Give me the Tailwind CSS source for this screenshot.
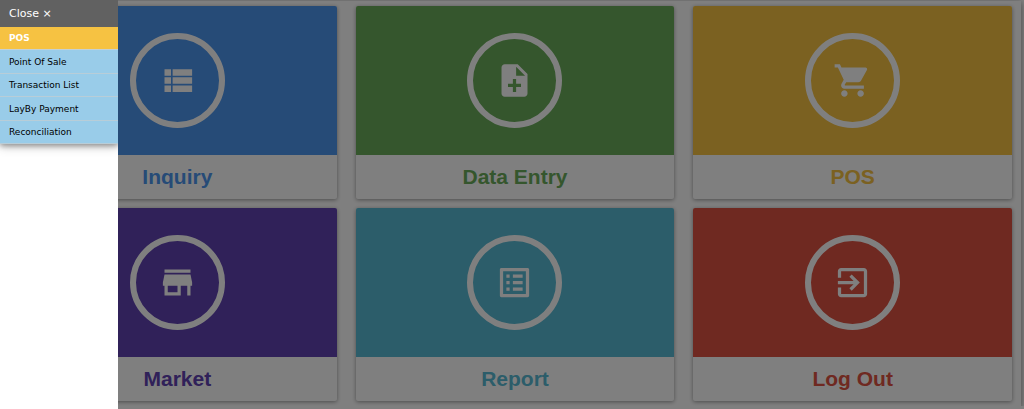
<!DOCTYPE html>
<html lang="en">
<head>
    <meta charset="UTF-8">
    <meta name="viewport" content="width=device-width, initial-scale=1.0">
    <title>POS</title>
    <script src="https://cdn.jsdelivr.net/npm/@tailwindcss/browser@4"></script>
</head>
<body class="bg-white font-['Liberation_Sans',Arial,sans-serif] overflow-hidden">
    <!-- Main menu -->
    <main class="mt-px mr-[3px] bg-white pt-[5px] pr-[9px] pb-[5px] pl-[18px] shadow-[0_2px_5px_rgba(0,0,0,0.3),0_2px_10px_rgba(0,0,0,0.2)]">
        <div class="grid grid-cols-3 gap-x-[19px] gap-y-[9px]">
            <a href="#inquiry" class="block rounded-xs overflow-hidden bg-white text-[#4c96ee] shadow-[0_1px_4px_rgba(0,0,0,0.4)]">
                <div class="flex justify-center bg-[#4c96ee] py-[27px]">
                    <div class="flex items-center justify-center size-[95px] rounded-full border-6 border-white text-white">
                        <svg class="size-[39px]" viewBox="0 0 24 24" fill="currentColor"><path d="M4 14h4v-4H4v4zm0 5h4v-4H4v4zM4 9h4V5H4v4zm5 5h12v-4H9v4zm0 5h12v-4H9v4zM9 5v4h12V5H9z"/></svg>
                    </div>
                </div>
                <h2 class="h-[44px] text-center text-[21px] leading-[44px] font-bold">Inquiry</h2>
            </a>
            <a href="#data-entry" class="block rounded-xs overflow-hidden bg-white text-[#6aac5a] shadow-[0_1px_4px_rgba(0,0,0,0.4)]">
                <div class="flex justify-center bg-[#6aac5a] py-[27px]">
                    <div class="flex items-center justify-center size-[95px] rounded-full border-6 border-white text-white">
                        <svg class="size-[39px]" viewBox="0 0 24 24" fill="currentColor"><path d="M14 2H6c-1.100 0-1.990.9-1.990 2L4 20c0 1.100.890 2 1.990 2H18c1.100 0 2-.9 2-2V8l-6-6zm2 14h-3v3h-2v-3H8v-2h3v-3h2v3h3v2zm-3-7V3.500L18.500 9H13z"/></svg>
                    </div>
                </div>
                <h2 class="h-[44px] text-center text-[21px] leading-[44px] font-bold">Data Entry</h2>
            </a>
            <a href="#pos" class="block rounded-xs overflow-hidden bg-white text-[#f6c242] shadow-[0_1px_4px_rgba(0,0,0,0.4)]">
                <div class="flex justify-center bg-[#f6c242] py-[27px]">
                    <div class="flex items-center justify-center size-[95px] rounded-full border-6 border-white text-white">
                        <svg class="size-[39px]" viewBox="0 0 24 24" fill="currentColor"><path d="M7 18c-1.100 0-1.990.9-1.990 2S5.900 22 7 22s2-.9 2-2-.9-2-2-2zM1 2v2h2l3.600 7.590-1.350 2.450c-.16.280-.25.610-.25.960 0 1.100.9 2 2 2h12v-2H7.420c-.14 0-.25-.11-.25-.25l.03-.12.900-1.630h7.450c.75 0 1.410-.41 1.750-1.030l3.580-6.490c.08-.14.120-.31.120-.48 0-.55-.45-1-1-1H5.210l-.94-2H1zm16 16c-1.100 0-1.990.9-1.990 2s.890 2 1.990 2 2-.9 2-2-.9-2-2-2z"/></svg>
                    </div>
                </div>
                <h2 class="h-[44px] text-center text-[21px] leading-[44px] font-bold">POS</h2>
            </a>
            <a href="#market" class="block rounded-xs overflow-hidden bg-white text-[#6042b2] shadow-[0_1px_4px_rgba(0,0,0,0.4)]">
                <div class="flex justify-center bg-[#6042b2] py-[27px]">
                    <div class="flex items-center justify-center size-[95px] rounded-full border-6 border-white text-white">
                        <svg class="size-[39px]" viewBox="0 0 24 24" fill="currentColor"><path d="M20 4H4v2h16V4zm1 10v-2l-1-5H4l-1 5v2h1v6h10v-6h4v6h2v-6h1zm-9 4H6v-4h6v4z"/></svg>
                    </div>
                </div>
                <h2 class="h-[44px] text-center text-[21px] leading-[44px] font-bold">Market</h2>
            </a>
            <a href="#report" class="block rounded-xs overflow-hidden bg-white text-[#58bad4] shadow-[0_1px_4px_rgba(0,0,0,0.4)]">
                <div class="flex justify-center bg-[#58bad4] py-[27px]">
                    <div class="flex items-center justify-center size-[95px] rounded-full border-6 border-white text-white">
                        <svg class="size-[39px]" viewBox="0 0 24 24" fill="currentColor"><path d="M19 5v14H5V5h14m1.100-2H3.900c-.5 0-.9.400-.9.900v16.200c0 .4.400.9.900.9h16.200c.4 0 .9-.5.900-.9V3.900c0-.5-.5-.9-.9-.9zM11 7h6v2h-6V7zm0 4h6v2h-6v-2zm0 4h6v2h-6zM7 7h2v2H7zm0 4h2v2H7zm0 4h2v2H7z"/></svg>
                    </div>
                </div>
                <h2 class="h-[44px] text-center text-[21px] leading-[44px] font-bold">Report</h2>
            </a>
            <a href="#logout" class="block rounded-xs overflow-hidden bg-white text-[#de5242] shadow-[0_1px_4px_rgba(0,0,0,0.4)]">
                <div class="flex justify-center bg-[#de5242] py-[27px]">
                    <div class="flex items-center justify-center size-[95px] rounded-full border-6 border-white text-white">
                        <svg class="size-[39px]" viewBox="0 0 24 24" fill="currentColor"><path d="M10.090 15.590L11.500 17l5-5-5-5-1.410 1.410L12.670 11H3v2h9.670l-2.580 2.590zM19 3H5c-1.110 0-2 .9-2 2v4h2V5h14v14H5v-4H3v4c0 1.100.890 2 2 2h14c1.100 0 2-.9 2-2V5c0-1.100-.9-2-2-2z"/></svg>
                    </div>
                </div>
                <h2 class="h-[44px] text-center text-[21px] leading-[44px] font-bold">Log Out</h2>
            </a>
        </div>
    </main>

    <!-- Overlay -->
    <div class="fixed inset-0 bg-black/50"></div>

    <!-- Sidebar -->
    <nav class="fixed inset-y-0 left-0 w-[118px] overflow-hidden bg-white font-[Verdana,'DejaVu_Sans',sans-serif]">
        <div class="shadow-[0_2px_5px_rgba(0,0,0,0.3),0_2px_10px_rgba(0,0,0,0.25)]">
            <button type="button" class="block w-full h-[27px] bg-[#616161] px-[9px] pt-0.5 text-left text-[11px] text-white">Close &times;</button>
            <div class="flex flex-col h-[117px] text-[9px] text-black">
                <a href="#pos" class="flex flex-1 items-center border-b border-[#c5d0d5] bg-[#f6c242] px-[9px] pt-0.5 font-bold text-white">POS</a>
                <a href="#sale" class="flex flex-1 items-center border-b border-[#b8cdd8] bg-[#99cce9] px-[9px] pt-0.5">Point Of Sale</a>
                <a href="#transactions" class="flex flex-1 items-center border-b border-[#b8cdd8] bg-[#99cce9] px-[9px] pt-0.5">Transaction List</a>
                <a href="#layby" class="flex flex-1 items-center border-b border-[#b8cdd8] bg-[#99cce9] px-[9px] pt-0.5">LayBy Payment</a>
                <a href="#reconciliation" class="flex flex-1 items-center border-b border-[#b8cdd8] bg-[#99cce9] px-[9px] pt-0.5">Reconciliation</a>
            </div>
        </div>
    </nav>
</body>
</html>
